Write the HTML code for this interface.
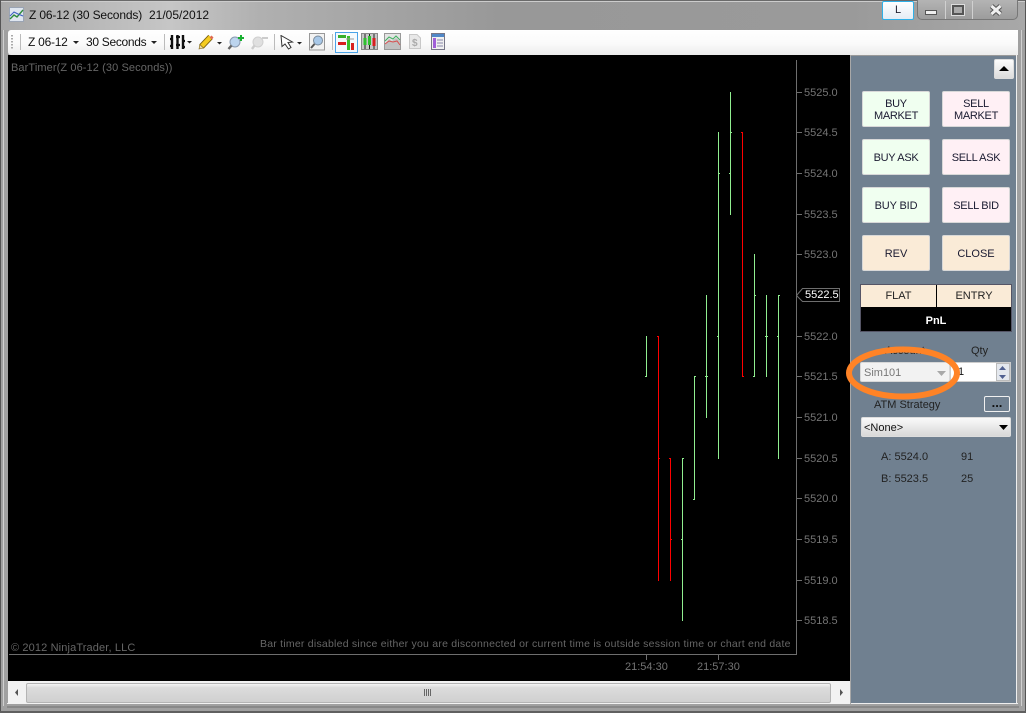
<!DOCTYPE html>
<html><head><meta charset="utf-8">
<style>
*{box-sizing:border-box}
html,body{margin:0;padding:0;width:1026px;height:713px;overflow:hidden;background:#a0a0a0}
body{position:relative;font-family:"Liberation Sans",sans-serif;font-size:11px}
.a{position:absolute}
.t{position:absolute;white-space:nowrap}
.btn{position:absolute;width:68px;height:36px;border:1px solid #d8d8d8;border-radius:2px;text-align:center;font-size:11px;line-height:12px;color:#1a1a30;display:flex;align-items:center;justify-content:center;padding-top:2px}
.g{background:#f0fff0}.r{background:#fff0f5}.o{background:#faebd7}
.n{letter-spacing:-.3px}
.px{color:#747474;font-size:11px;left:804px;line-height:13px;margin-top:1px}
.tk{position:absolute;left:796px;width:6px;height:1px;background:#6e6e6e}
.w{color:#222}
</style></head><body>
<div class="a" style="left:0;top:0;width:1026px;height:30px;background:linear-gradient(90deg,#a8a8a8 0,#c6c6c6 170px,#b0b0b0 260px,#989898 500px,#9a9a9a 850px,#a8a8a8 100%)"></div>
<div class="a" style="left:0;top:0;width:1026px;height:1px;background:#6a6a6a"></div>
<div class="a" style="left:0;top:0;width:1px;height:713px;background:#555"></div>
<div class="a" style="left:1px;top:1px;width:1024px;height:1px;background:#ccc"></div>
<div class="a" style="left:1025px;top:0;width:1px;height:713px;background:#555"></div>
<div class="a" style="left:0;top:711px;width:1026px;height:2px;background:#606060"></div>
<div class="a" style="left:7px;top:703px;width:1011px;height:1px;background:#eee"></div>
<div class="a" style="left:1016px;top:55px;width:1px;height:649px;background:#eee"></div>
<div class="a" style="left:7px;top:706px;width:1012px;height:2px;background:#888"></div>
<div class="a" style="left:3px;top:30px;width:1px;height:676px;background:#d0d0d0"></div>
<div class="a" style="left:1021px;top:30px;width:1px;height:676px;background:#d0d0d0"></div>

<svg class="a" style="left:9px;top:7px" width="15" height="15" viewBox="0 0 15 15"><rect x=".5" y=".5" width="14" height="14" fill="#dfe6f0" stroke="#9aa4b4"/><path d="M1 12L5 8L8 10L14 3" fill="none" stroke="#2e8b3c" stroke-width="1.400"/><path d="M1 9L5 5L9 7L14 9" fill="none" stroke="#3a5ec0" stroke-width="1"/></svg>
<div class="t" style="left:29px;top:8px;font-size:12px;color:#101010;line-height:15px;letter-spacing:-.15px">Z 06-12 (30 Seconds)</div>
<div class="t" style="left:149px;top:8px;font-size:12px;color:#101010;line-height:15px">21/05/2012</div>

<div class="a" style="left:917px;top:0;width:101px;height:20px;border:1px solid #777;border-top:none;border-radius:0 0 5px 5px;background:linear-gradient(#b4b4b4,#9c9c9c)"></div>
<div class="a" style="left:882px;top:1px;width:32px;height:19px;background:linear-gradient(#fff,#e4ecf5);border:1px solid #2fb0e8;border-radius:2px;text-align:center;font-size:11px;line-height:17px;color:#223">L</div>
<div class="a" style="left:945px;top:1px;width:1px;height:18px;background:#d0d0d0"></div>
<div class="a" style="left:972px;top:1px;width:1px;height:18px;background:#d0d0d0"></div>
<div class="a" style="left:925px;top:10px;width:12px;height:5px;background:#eee;border:1px solid #555"></div>
<div class="a" style="left:952px;top:5px;width:12px;height:10px;background:#aaa;border:2px solid #555;outline:1px solid #ddd"></div>
<svg class="a" style="left:989px;top:4px" width="14" height="12" viewBox="0 0 14 12"><path d="M2.500 2L11.500 10M11.500 2L2.500 10" stroke="#555" stroke-width="5"/><path d="M2.500 2L11.500 10M11.500 2L2.500 10" stroke="#f0f0f0" stroke-width="3"/></svg>

<div class="a" style="left:8px;top:30px;width:1010px;height:25px;background:linear-gradient(#fff 0,#fafafa 55%,#ececec 100%);border-radius:3px 0 0 3px"></div>
<div class="a" style="left:11px;top:35px;width:2px;height:14px;background-image:linear-gradient(#aaa 50%,transparent 50%);background-size:2px 3px"></div>
<div class="a" style="left:20px;top:34px;width:1px;height:16px;background:#bbb"></div>
<div class="t" style="left:28px;top:35px;font-size:12px;color:#101010;line-height:14px;letter-spacing:-.25px">Z 06-12</div>
<svg class="a" style="left:73px;top:41px" width="6" height="3"><path d="M0 0H6L3 3Z" fill="#222"/></svg>
<div class="t" style="left:86px;top:35px;font-size:12px;color:#101010;line-height:14px;letter-spacing:-.3px">30 Seconds</div>
<svg class="a" style="left:151px;top:41px" width="6" height="3"><path d="M0 0H6L3 3Z" fill="#222"/></svg>
<div class="a" style="left:164px;top:34px;width:1px;height:16px;background:#bbb"></div>
<svg class="a" style="left:168px;top:33px" width="25" height="18" viewBox="0 0 25 18"><path d="M4 2V16M9.500 2V16M15 2V16" stroke="#111" stroke-width="2.400"/><path d="M2 6H5M8 4H12M8 12H12M14 8H17M2 13H5M14 14H17" stroke="#111" stroke-width="2.200"/><path d="M19 8H24L21.500 10.500Z" fill="#222"/></svg>
<svg class="a" style="left:198px;top:34px" width="24" height="16" viewBox="0 0 24 16"><path d="M3.500 12.500L12.500 3" stroke="#7a6010" stroke-width="6"/><path d="M3.500 12.500L12.500 3" stroke="#f5cc20" stroke-width="4.200"/><path d="M11.500 3.500L13.500 1.500L15.500 3.500L14 5.500Z" fill="#e06a50"/><path d="M1 15L1.800 10.500L5.500 14Z" fill="#f0dca0" stroke="#7a6010" stroke-width=".6"/><path d="M19 8H24L21.500 10.500Z" fill="#222"/></svg>
<svg class="a" style="left:227px;top:34px" width="18" height="17" viewBox="0 0 18 17"><circle cx="8" cy="8" r="5" fill="#bcd4ee" stroke="#8a9ab0"/><path d="M4.500 11.500L1.500 15" stroke="#666" stroke-width="2.400"/><path d="M14 1V7M11 4H17" stroke="#18b030" stroke-width="2"/></svg>
<svg class="a" style="left:251px;top:34px" width="18" height="17" viewBox="0 0 18 17"><circle cx="7" cy="8" r="5" fill="#e0e0e0" stroke="#cfcfcf"/><path d="M3.500 11.500L1 15" stroke="#ccc" stroke-width="2.400"/><path d="M11 4H17" stroke="#ccc" stroke-width="2"/></svg>
<div class="a" style="left:274px;top:34px;width:1px;height:16px;background:#bbb"></div>
<svg class="a" style="left:280px;top:35px" width="23" height="15" viewBox="0 0 23 15"><path d="M1 .5L2 11.500L5 9L8.500 14L11 12.500L8 7.500L12.500 7Z" fill="#fff" stroke="#333"/><path d="M17 7H22L19.500 9.500Z" fill="#222"/></svg>
<svg class="a" style="left:309px;top:33px" width="16" height="18" viewBox="0 0 16 18"><rect x=".5" y=".5" width="15" height="16.500" fill="#f2f2f2" stroke="#999"/><circle cx="9" cy="7.500" r="4.500" fill="#a8c8e8" stroke="#7a8a9a"/><path d="M5.500 11L2 15" stroke="#555" stroke-width="2"/></svg>
<div class="a" style="left:332px;top:34px;width:1px;height:16px;background:#bbb"></div>
<div class="a" style="left:335px;top:32px;width:23px;height:21px;background:#f4f9fd;border:1px solid #4aa3e8"></div>
<svg class="a" style="left:338px;top:34px" width="17" height="17" viewBox="0 0 17 17"><rect x="0" y="1" width="8" height="3" fill="#38b02c"/><rect x="0" y="8" width="8" height="3" fill="#d82020"/><rect x="9" y="2" width="3" height="14" fill="#38c02c"/><rect x="13" y="9" width="3" height="7" fill="#d82020"/><path d="M8 5H16" stroke="#999"/></svg>
<svg class="a" style="left:361px;top:33px" width="17" height="17" viewBox="0 0 17 17"><rect x=".5" y=".5" width="16" height="16" fill="#c8c8c8" stroke="#888"/><path d="M4 1V16M8.500 1V16M13 1V16" stroke="#222"/><rect x="2.500" y="5" width="3" height="7" fill="#30c030"/><rect x="7" y="3" width="3" height="9" fill="#30c030"/><rect x="11.500" y="5" width="3" height="8" fill="#d82020"/></svg>
<svg class="a" style="left:384px;top:33px" width="17" height="17" viewBox="0 0 17 17"><rect x=".5" y=".5" width="16" height="16" fill="#e4e4e4" stroke="#999"/><path d="M1 11L5 6L8 8L12 5L16 8V16H1Z" fill="#c0c0c0"/><path d="M1 8L5 4L9 6L12 3L16 7" fill="none" stroke="#40b060"/><path d="M1 11L5 8L9 9L13 8L16 12" fill="none" stroke="#d85050"/></svg>
<svg class="a" style="left:408px;top:33px" width="14" height="17" viewBox="0 0 14 17"><path d="M1.500 1.500H9L12.500 5V15.500H1.500Z" fill="#e8e8e8" stroke="#c8c8c8"/><text x="4" y="13" font-family="Liberation Sans" font-size="10" font-weight="bold" fill="#aaa">$</text></svg>
<svg class="a" style="left:431px;top:33px" width="14" height="17" viewBox="0 0 14 17"><rect x=".5" y=".5" width="13" height="16" fill="#f0f0f0" stroke="#778"/><rect x="1" y="1" width="12" height="3" fill="#5088c8"/><rect x="2" y="5" width="3" height="10" fill="#a060d8"/><path d="M6 7H12M6 10H12M6 13H12" stroke="#88a"/></svg>

<div class="a" style="left:8px;top:55px;width:842px;height:626px;background:#000"></div>
<div class="t" style="left:11px;top:62px;color:#666;font-size:11px;line-height:13px;letter-spacing:.1px">BarTimer(Z 06-12 (30 Seconds))</div>
<div class="a" style="left:796px;top:60px;width:1px;height:595px;background:#6e6e6e"></div>
<div class="a" style="left:9px;top:654px;width:788px;height:1px;background:#6e6e6e"></div>
<div class="t" style="left:11px;top:642px;color:#666;font-size:11px;line-height:13px;letter-spacing:.13px">© 2012 NinjaTrader, LLC</div>
<div class="t" style="left:260px;top:638px;color:#666;font-size:10.500px;line-height:13px;letter-spacing:.23px">Bar timer disabled since either you are disconnected or current time is outside session time or chart end date</div>
<div class="a" style="left:646px;top:655px;width:1px;height:5px;background:#6e6e6e"></div>
<div class="a" style="left:718px;top:655px;width:1px;height:5px;background:#6e6e6e"></div>
<div class="t" style="left:625px;top:661px;color:#747474;line-height:13px">21:54:30</div>
<div class="t" style="left:697px;top:661px;color:#747474;line-height:13px">21:57:30</div>

<div class="t px" style="top:86px">5525.0</div><div class="tk" style="top:92px"></div>
<div class="t px" style="top:126px">5524.5</div><div class="tk" style="top:132px"></div>
<div class="t px" style="top:167px">5524.0</div><div class="tk" style="top:173px"></div>
<div class="t px" style="top:208px">5523.5</div><div class="tk" style="top:214px"></div>
<div class="t px" style="top:248px">5523.0</div><div class="tk" style="top:254px"></div>
<div class="t px" style="top:330px">5522.0</div><div class="tk" style="top:336px"></div>
<div class="t px" style="top:370px">5521.5</div><div class="tk" style="top:376px"></div>
<div class="t px" style="top:411px">5521.0</div><div class="tk" style="top:417px"></div>
<div class="t px" style="top:452px">5520.5</div><div class="tk" style="top:458px"></div>
<div class="t px" style="top:492px">5520.0</div><div class="tk" style="top:498px"></div>
<div class="t px" style="top:533px">5519.5</div><div class="tk" style="top:539px"></div>
<div class="t px" style="top:574px">5519.0</div><div class="tk" style="top:580px"></div>
<div class="t px" style="top:614px">5518.5</div><div class="tk" style="top:620px"></div>
<svg class="a" style="left:796px;top:288px" width="44" height="15"><path d="M.5 7.500L6.500 .5H43.500V13.500H6.500Z" fill="#000" stroke="#6e6e6e"/></svg>
<div class="t" style="left:805px;top:289px;color:#fff;font-size:11px;line-height:13px">5522.5</div>

<svg class="a" style="left:640px;top:85px" width="150" height="540" shape-rendering="crispEdges">
<g stroke="#90ee90" fill="none">
<path d="M6.500 251V292M5 291.500H6"/>
<path d="M42.500 373V536M41 454.500H42M43 373.500H44"/>
<path d="M54.500 291V415M53 414.500H54M55 291.500H56"/>
<path d="M66.500 210V333M65 291.500H68"/>
<path d="M78.500 47V374M77 251.500H78M79 88.500H80"/>
<path d="M90.500 7V130M89 88.500H90M91 47.500H92"/>
<path d="M114.500 169V292M113 291.500H114M115 210.500H116"/>
<path d="M126.500 210V292M125 251.500H128"/>
<path d="M138.500 210V374M137 251.500H138M139 210.500H140"/>
</g>
<g stroke="#ff0000" fill="none">
<path d="M18.500 251V496M17 251.500H18M19 373.500H20"/>
<path d="M30.500 373V496M29 373.500H30M31 454.500H32"/>
<path d="M102.500 47V292M101 47.500H102M103 291.500H104"/>
</g>
</svg>

<div class="a" style="left:8px;top:681px;width:842px;height:23px;background:#f2f2f2"></div>
<div class="a" style="left:26px;top:683px;width:805px;height:20px;background:linear-gradient(#f4f4f4 0,#dcdcdc 20%,#d0d0d0 100%);border:1px solid #b4b4b4;border-radius:2px"></div>
<div class="a" style="left:424px;top:689px;width:8px;height:7px;background-image:linear-gradient(90deg,#666 1px,transparent 1px);background-size:2px 7px"></div>
<svg class="a" style="left:15px;top:689px" width="3" height="7"><path d="M3 0V7L0 3.500Z" fill="#555"/></svg>
<svg class="a" style="left:840px;top:689px" width="3" height="7"><path d="M0 0V7L3 3.500Z" fill="#555"/></svg>

<div class="a" style="left:850px;top:55px;width:1px;height:649px;background:#a8a8a8"></div>
<div class="a" style="left:851px;top:55px;width:165px;height:1px;background:#999"></div>
<div class="a" style="left:851px;top:56px;width:165px;height:647px;background:#708090"></div>
<div class="a" style="left:994px;top:59px;width:20px;height:20px;background:linear-gradient(#fdfdfd,#dcdcdc);border:1px solid #ddd;border-radius:2px"></div>
<svg class="a" style="left:999px;top:66px" width="10" height="5"><path d="M0 5H10L5 0Z" fill="#000"/></svg>

<div class="btn g" style="left:862px;top:91px"><span class="n">BUY<br>MARKET</span></div>
<div class="btn r" style="left:942px;top:91px"><span class="n">SELL<br>MARKET</span></div>
<div class="btn g" style="left:862px;top:139px"><span class="n">BUY ASK</span></div>
<div class="btn r" style="left:942px;top:139px"><span class="n">SELL ASK</span></div>
<div class="btn g" style="left:862px;top:187px"><span style="letter-spacing:-.15px">BUY BID</span></div>
<div class="btn r" style="left:942px;top:187px"><span class="n">SELL BID</span></div>
<div class="btn o" style="left:862px;top:235px">REV</div>
<div class="btn o" style="left:942px;top:235px">CLOSE</div>

<div class="a" style="left:860px;top:284px;width:152px;height:48px;background:#000;border:1px solid #556"></div>
<div class="a" style="left:861px;top:285px;width:75px;height:22px;background:#faebd7;text-align:center;line-height:23px;color:#222">FLAT</div>
<div class="a" style="left:937px;top:285px;width:74px;height:22px;background:#faebd7;text-align:center;line-height:23px;color:#222">ENTRY</div>
<div class="t" style="left:861px;top:315px;width:150px;text-align:center;color:#fff;font-weight:bold;line-height:13px;font-size:11px">PnL</div>

<div class="t w" style="left:885px;top:345px;line-height:13px">Account</div>
<div class="t w" style="left:971px;top:345px;line-height:13px">Qty</div>
<div class="a" style="left:950px;top:362px;width:61px;height:20px;background:#fff;border:1px solid #ccc"></div>
<div class="t" style="left:958px;top:366px;color:#111;line-height:13px">1</div>
<div class="a" style="left:996px;top:363px;width:14px;height:18px;background:#e4e8ee;border:1px solid #bbb"></div>
<svg class="a" style="left:999px;top:366px" width="8" height="13"><path d="M0 4H7L3.500 0ZM0 9H7L3.500 13Z" fill="#506090"/></svg>
<div class="a" style="left:860px;top:362px;width:90px;height:20px;background:#f2f2f2;border:1px solid #d8d8d8;border-radius:2px"></div>
<div class="t" style="left:864px;top:367px;color:#777;line-height:13px">Sim101</div>
<svg class="a" style="left:937px;top:371px" width="9" height="5"><path d="M0 0H9L4.500 5Z" fill="#a8a8a8"/></svg>
<svg class="a" style="left:845px;top:345px" width="118" height="56"><ellipse cx="58" cy="28" rx="54" ry="23.500" fill="none" stroke="#ff8326" stroke-width="6"/></svg>

<div class="t w" style="left:874px;top:399px;line-height:13px">ATM Strategy</div>
<div class="a" style="left:984px;top:396px;width:26px;height:16px;background:#708090;border:1.500px solid #f0f0f0;border-radius:2px;text-align:center;font-size:13px;font-weight:bold;line-height:12px;color:#111">...</div>
<div class="a" style="left:861px;top:417px;width:150px;height:20px;background:linear-gradient(#fafafa,#d8d8d8);border:1px solid #ddd;border-radius:2px"></div>
<div class="t" style="left:864px;top:422px;color:#111;line-height:13px">&lt;None&gt;</div>
<svg class="a" style="left:999px;top:425px" width="9" height="5"><path d="M0 0H9L4.500 5Z" fill="#000"/></svg>
<div class="t w" style="left:881px;top:451px;line-height:13px">A: 5524.0</div>
<div class="t w" style="left:961px;top:451px;line-height:13px">91</div>
<div class="t w" style="left:881px;top:473px;line-height:13px">B: 5523.5</div>
<div class="t w" style="left:961px;top:473px;line-height:13px">25</div>
</body></html>
